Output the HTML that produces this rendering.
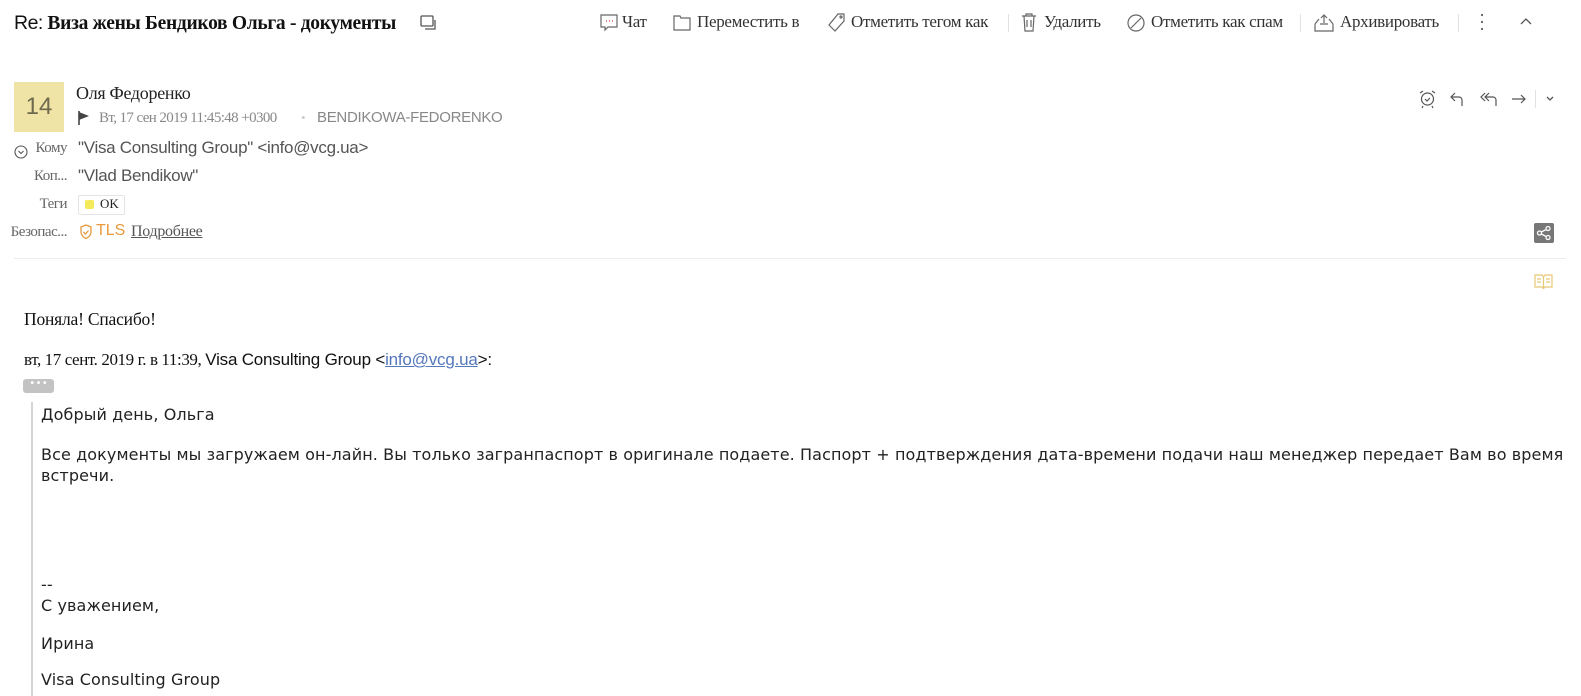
<!DOCTYPE html>
<html><head><meta charset="utf-8"><style>
*{margin:0;padding:0;box-sizing:border-box}
body{width:1581px;height:696px;overflow:hidden;background:#fff;position:relative;font-family:"Liberation Serif","Noto Serif CJK SC",serif;color:#222}
.a{position:absolute;white-space:nowrap}
.tb{font-size:17px;color:#333;top:12px;letter-spacing:-0.3px}
.sep{position:absolute;top:14px;width:1px;height:18px;background:#e2e2e2}
.lab{position:absolute;right:1514px;font-size:15px;color:#666;text-align:right;letter-spacing:-0.5px}
.val{font-family:"Liberation Sans",sans-serif;font-size:17px;color:#555;letter-spacing:-0.3px}
.q{font-family:"DejaVu Sans",sans-serif;font-size:16px;color:#222;left:41px;letter-spacing:0.1px}
svg{position:absolute}
</style></head><body>
<div class="a" style="left:14px;top:12px;font-size:19.5px;font-weight:bold;color:#111;letter-spacing:-0.3px"><span style="font-family:'Liberation Sans',sans-serif;font-weight:normal;letter-spacing:-0.5px">Re:</span> Виза жены Бендиков Ольга - документы</div>
<svg style="left:419px;top:14px" width="20" height="18" viewBox="0 0 20 18" fill="none" stroke="#555" stroke-width="1.3"><rect x="2" y="2" width="12" height="10" rx="1"/><path d="M6 15h10V6"/></svg>

<svg style="left:599px;top:13px" width="20" height="20" viewBox="0 0 20 20" fill="none" stroke="#666" stroke-width="1.2"><path d="M2 2h16v12H9l-3 3v-3H2z"/><path d="M7 8h1M10 8h1M13 8h1" stroke="#d33"/></svg>
<div class="a tb" style="left:622px">Чат</div>
<svg style="left:672px;top:13px" width="20" height="20" viewBox="0 0 20 20" fill="none" stroke="#666" stroke-width="1.2"><path d="M2 3h6l1 2h9v12H2z"/></svg>
<div class="a tb" style="left:697px">Переместить в</div>
<svg style="left:827px;top:12px" width="20" height="22" viewBox="0 0 20 22" fill="none" stroke="#666" stroke-width="1.2"><path d="M11 2h6v7l-9 10-6-6z"/><circle cx="14" cy="5" r="1"/></svg>
<div class="a tb" style="left:851px">Отметить тегом как</div>
<div class="sep" style="left:1008px"></div>
<svg style="left:1020px;top:12px" width="18" height="21" viewBox="0 0 18 21" fill="none" stroke="#666" stroke-width="1.2"><path d="M2 4h14M6 4V2h6v2M4 4l1 15h8l1-15M7 8v7M11 8v7"/></svg>
<div class="a tb" style="left:1044px">Удалить</div>
<svg style="left:1126px;top:13px" width="20" height="20" viewBox="0 0 20 20" fill="none" stroke="#666" stroke-width="1.2"><circle cx="10" cy="10" r="8"/><path d="M5 15L15 5"/></svg>
<div class="a tb" style="left:1151px">Отметить как спам</div>
<div class="sep" style="left:1300px"></div>
<svg style="left:1313px;top:13px" width="22" height="20" viewBox="0 0 22 20" fill="none" stroke="#666" stroke-width="1.2"><path d="M2 11v7h18v-7M2 11l4-5M20 11l-4-5M7 11h8M11 2v8M8 5l3-3 3 3"/></svg>
<div class="a tb" style="left:1340px">Архивировать</div>
<div class="sep" style="left:1458px"></div>
<div class="a" style="left:1479px;top:12px;font-size:18px;color:#555;line-height:7px;width:4px">·<br>·<br>·</div>
<svg style="left:1519px;top:16px" width="14" height="10" viewBox="0 0 14 10" fill="none" stroke="#555" stroke-width="1.3"><path d="M2 8l5-5 5 5"/></svg>

<div class="a" style="left:14px;top:82px;width:50px;height:50px;background:#efe3a6;color:#6e6a4e;font-family:'Liberation Sans',sans-serif;font-size:24px;line-height:50px;text-align:center">14</div>
<div class="a" style="left:76px;top:83px;font-size:18px;color:#222;letter-spacing:-0.3px">Оля Федоренко</div>
<svg style="left:77px;top:110px" width="14" height="16" viewBox="0 0 14 16"><path d="M2 1v14" stroke="#444" stroke-width="1.6"/><path d="M2 2l10 4-10 4z" fill="#444"/></svg>
<div class="a" style="left:99px;top:110px;font-size:15px;color:#888;letter-spacing:-0.6px">Вт, 17 сен 2019 11:45:48 +0300</div>
<div class="a" style="left:301px;top:110px;font-size:13px;color:#ccc">•</div>
<div class="a" style="left:317px;top:109px;font-family:'Liberation Sans',sans-serif;font-size:15px;color:#888;letter-spacing:-0.3px">BENDIKOWA-FEDORENKO</div>

<svg style="left:14px;top:145px" width="14" height="14" viewBox="0 0 14 14" fill="none" stroke="#555" stroke-width="1.1"><circle cx="7" cy="7" r="6"/><path d="M4.5 6l2.5 2.5L9.5 6"/></svg>
<div class="lab" style="top:140px">Кому</div>
<div class="lab" style="top:168px">Коп...</div>
<div class="lab" style="top:196px">Теги</div>
<div class="lab" style="top:224px">Безопас...</div>
<div class="a val" style="left:78px;top:138px">"Visa Consulting Group" &lt;info@vcg.ua&gt;</div>
<div class="a val" style="left:78px;top:166px">"Vlad Bendikow"</div>
<div class="a" style="left:78px;top:195px;height:20px;width:47px;border:1px solid #e4e4e4;border-radius:2px"></div>
<div class="a" style="left:85px;top:200px;width:9px;height:9px;background:#f5ea5a;border-radius:2px"></div>
<div class="a" style="left:100px;top:196px;font-size:13px;color:#222">OK</div>
<svg style="left:79px;top:224px" width="14" height="16" viewBox="0 0 14 16" fill="none" stroke="#e89a3c" stroke-width="1.3"><path d="M7 1l5 2v5c0 3-2.5 5.5-5 6.5C4.5 13.5 2 11 2 8V3z"/><path d="M4.5 8l2 2 3-3.5"/></svg>
<div class="a" style="left:96px;top:222px;font-family:'Liberation Sans',sans-serif;font-size:16px;color:#e89a3c">TLS</div>
<div class="a" style="left:131px;top:223px;font-size:16px;color:#555;text-decoration:underline;letter-spacing:-0.3px">Подробнее</div>

<svg style="left:1418px;top:89px" width="19" height="20" viewBox="0 0 19 20" fill="none" stroke="#555" stroke-width="1.2"><circle cx="9.5" cy="10" r="6"/><path d="M7 10l2 2 3-3M2 4l3-2M17 4l-3-2M5 17l-1 2M14 17l1 2"/></svg>
<svg style="left:1449px;top:90px" width="16" height="18" viewBox="0 0 16 18" fill="none" stroke="#555" stroke-width="1.2"><path d="M6 3L2 7l4 4M2 7h8a3 3 0 013 3v6"/></svg>
<svg style="left:1479px;top:90px" width="20" height="18" viewBox="0 0 20 18" fill="none" stroke="#555" stroke-width="1.2"><path d="M6 3L2 7l4 4M10 3L6 7l4 4M6 7h8a3 3 0 013 3v6"/></svg>
<svg style="left:1510px;top:90px" width="18" height="18" viewBox="0 0 18 18" fill="none" stroke="#555" stroke-width="1.2"><path d="M2 9h13M11 5l4 4-4 4"/></svg>
<div class="a" style="left:1535px;top:90px;width:1px;height:18px;background:#e2e2e2"></div>
<svg style="left:1545px;top:95px" width="10" height="8" viewBox="0 0 10 8" fill="none" stroke="#555" stroke-width="1.3"><path d="M2 2l3 3 3-3"/></svg>

<div class="a" style="left:1534px;top:223px;width:20px;height:20px;background:#777;border-radius:2px"></div>
<svg style="left:1534px;top:223px" width="20" height="20" viewBox="0 0 20 20" fill="none" stroke="#fff" stroke-width="1.3"><circle cx="5.5" cy="10" r="2"/><circle cx="14" cy="5.5" r="2"/><circle cx="14" cy="14.5" r="2"/><path d="M7.3 9l5-2.6M7.3 11l5 2.6"/></svg>
<div class="a" style="left:14px;top:258px;width:1552px;height:1px;background:#ececec"></div>
<svg style="left:1533px;top:272px" width="21" height="18" viewBox="0 0 21 18" fill="none" stroke="#e8c774" stroke-width="1.2"><path d="M2 3h7l1.5 2L12 3h7v12h-7l-1.5 1.5L9 15H2zM10.5 5v11M4 7h4M4 10h4M13 7h4M13 10h4"/></svg>

<div class="a" style="left:24px;top:309px;font-size:17.5px;color:#111;letter-spacing:-0.2px">Поняла! Спасибо!</div>
<div class="a" style="left:24px;top:350px;font-size:17px;color:#111;letter-spacing:-0.4px">вт, 17 сент. 2019 г. в 11:39, <span style="font-family:'Liberation Sans',sans-serif;letter-spacing:-0.2px">Visa Consulting Group &lt;<span style="color:#5577bb;text-decoration:underline">info@vcg.ua</span>&gt;:</span></div>
<div class="a" style="left:23px;top:379px;width:31px;height:14px;background:#c3c3c3;border-radius:3px;color:#fff;font-size:10px;line-height:10px;text-align:center;font-family:'Liberation Sans',sans-serif;font-weight:bold">• • •</div>
<div class="a" style="left:31px;top:402px;width:2px;height:294px;background:#d4d4d4"></div>
<div class="a q" style="top:405px">Добрый день, Ольга</div>
<div class="a q" style="top:445px">Все документы мы загружаем он-лайн. Вы только загранпаспорт в оригинале подаете. Паспорт + подтверждения дата-времени подачи наш менеджер передает Вам во время</div>
<div class="a q" style="top:466px">встречи.</div>
<div class="a q" style="top:575px">--</div>
<div class="a q" style="top:596px">С уважением,</div>
<div class="a q" style="top:634px">Ирина</div>
<div class="a q" style="top:670px">Visa Consulting Group</div>
</body></html>
